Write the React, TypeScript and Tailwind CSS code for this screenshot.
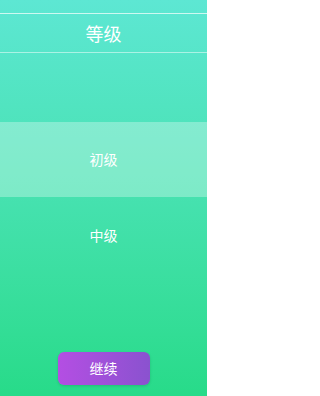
export default function App() {
  const levels = ["初级", "中级"];
  const selected = 0;

  return (
    <div
      className="w-[207px] h-[396px] flex flex-col bg-gradient-to-b from-[#5de7d3] to-[#27db89] text-white overflow-hidden"
      style={{ fontFamily: '"Noto Sans CJK SC", "Noto Sans", sans-serif' }}
    >
      {/* 标题栏 */}
      <div className="pt-[13px]">
        <div className="h-px bg-white/70" />
        <div className="h-[38px] flex items-center justify-center text-[18px] leading-none">
          等级
        </div>
        <div className="h-px bg-white/50" />
      </div>

      {/* 等级列表 */}
      <div className="mt-[69px] flex flex-col">
        {levels.map((level, i) => (
          <div
            key={level}
            className={
              i === selected
                ? "h-[75px] flex items-center justify-center text-[14px] bg-white/30"
                : "h-[76px] flex items-center justify-center text-[14px]"
            }
          >
            {level}
          </div>
        ))}
      </div>

      <div className="flex-1" />

      {/* 继续按钮 */}
      <div className="flex justify-center pb-[11px]">
        <button className="w-[92px] h-[33px] rounded-[6px] bg-gradient-to-r from-[#b44ee3] to-[#8a52cf] text-[14px] text-white shadow-[0_1px_3px_rgba(0,0,0,0.15)]">
          继续
        </button>
      </div>
    </div>
  );
}
